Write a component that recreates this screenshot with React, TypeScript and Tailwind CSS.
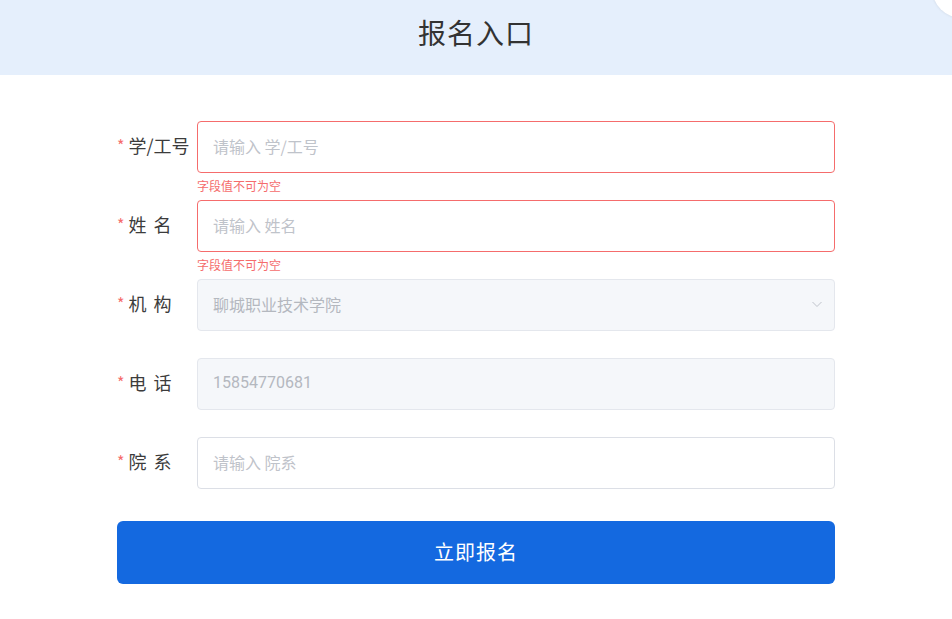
import React from 'react'

const font = { fontFamily: '"Noto Sans CJK SC", "Noto Sans", sans-serif' }

function Label({ text }: { text: string }) {
    return (
        <div className="w-[80px] shrink-0 flex items-center text-[18px] text-[#3c3c3c] pb-[4px]">
            <span className="text-[#f56c6c] mr-[4px] text-[16px]">*</span>
            <span className="[word-spacing:3px]">{text}</span>
        </div>
    )
}

function Row({ label, children, error }: { label: string; children: React.ReactNode; error?: string }) {
    return (
        <div className="flex items-center">
            <Label text={label} />
            <div className="relative flex-1">
                {children}
                {error && (
                    <div className="absolute left-0 top-full pt-[4px] text-[12px] leading-[18px] text-[#f56c6c]">{error}</div>
                )}
            </div>
        </div>
    )
}

export default function App() {
    return (
        <div className="w-[952px] h-[619px] bg-white relative overflow-hidden" style={font}>
            <header className="h-[75px] bg-[#e5effc] flex items-center justify-center pb-[12px]">
                <h1 className="text-[28px] text-[#333] tracking-[1px]">报名入口</h1>
            </header>
            {/* corner close button peeking in */}
            <div className="absolute left-[932px] top-[-42px] w-[60px] h-[60px] rounded-full bg-white shadow-[0_0_3px_rgba(0,0,0,0.1)]" />
            <form className="w-[718px] mx-auto pt-[46px] flex flex-col gap-[27px]">
                <Row label="学/工号" error="字段值不可为空">
                    <input
                        placeholder="请输入 学/工号"
                        className="w-full h-[52px] rounded-[4px] border border-[#f56c6c] px-[15px] pb-[2px] text-[16px] outline-none placeholder:text-[#bfc3ca]"
                        style={font}
                    />
                </Row>
                <Row label="姓 名" error="字段值不可为空">
                    <input
                        placeholder="请输入 姓名"
                        className="w-full h-[52px] rounded-[4px] border border-[#f56c6c] px-[15px] pb-[2px] text-[16px] outline-none placeholder:text-[#bfc3ca]"
                        style={font}
                    />
                </Row>
                <Row label="机 构">
                    <div className="w-full h-[52px] rounded-[4px] border border-[#e4e7ed] bg-[#f5f7fa] pl-[15px] pr-[10px] pb-[2px] flex items-center justify-between text-[16px] text-[#b4b8bf]">
                        <span>聊城职业技术学院</span>
                        <svg width="14" height="14" viewBox="0 0 14 14" fill="none" stroke="#c0c4cc" strokeWidth="1">
                            <path d="M2.5 5l4.5 4.5 4.5-4.5" />
                        </svg>
                    </div>
                </Row>
                <Row label="电 话">
                    <div className="w-full h-[52px] rounded-[4px] border border-[#e4e7ed] bg-[#f5f7fa] px-[15px] pb-[2px] flex items-center text-[16px] text-[#b4b8bf]" style={{ fontFamily: 'Roboto, "Noto Sans CJK SC", sans-serif' }}>
                        15854770681
                    </div>
                </Row>
                <Row label="院 系">
                    <input
                        placeholder="请输入 院系"
                        className="w-full h-[52px] rounded-[4px] border border-[#dcdfe6] px-[15px] pb-[2px] text-[16px] outline-none placeholder:text-[#bfc3ca]"
                        style={font}
                    />
                </Row>
                <button
                    type="button"
                    className="mt-[5px] h-[63px] w-full rounded-[6px] bg-[#1469e0] text-white text-[20px] tracking-[1px] pb-[2px]"
                    style={font}
                >
                    立即报名
                </button>
            </form>
        </div>
    )
}
